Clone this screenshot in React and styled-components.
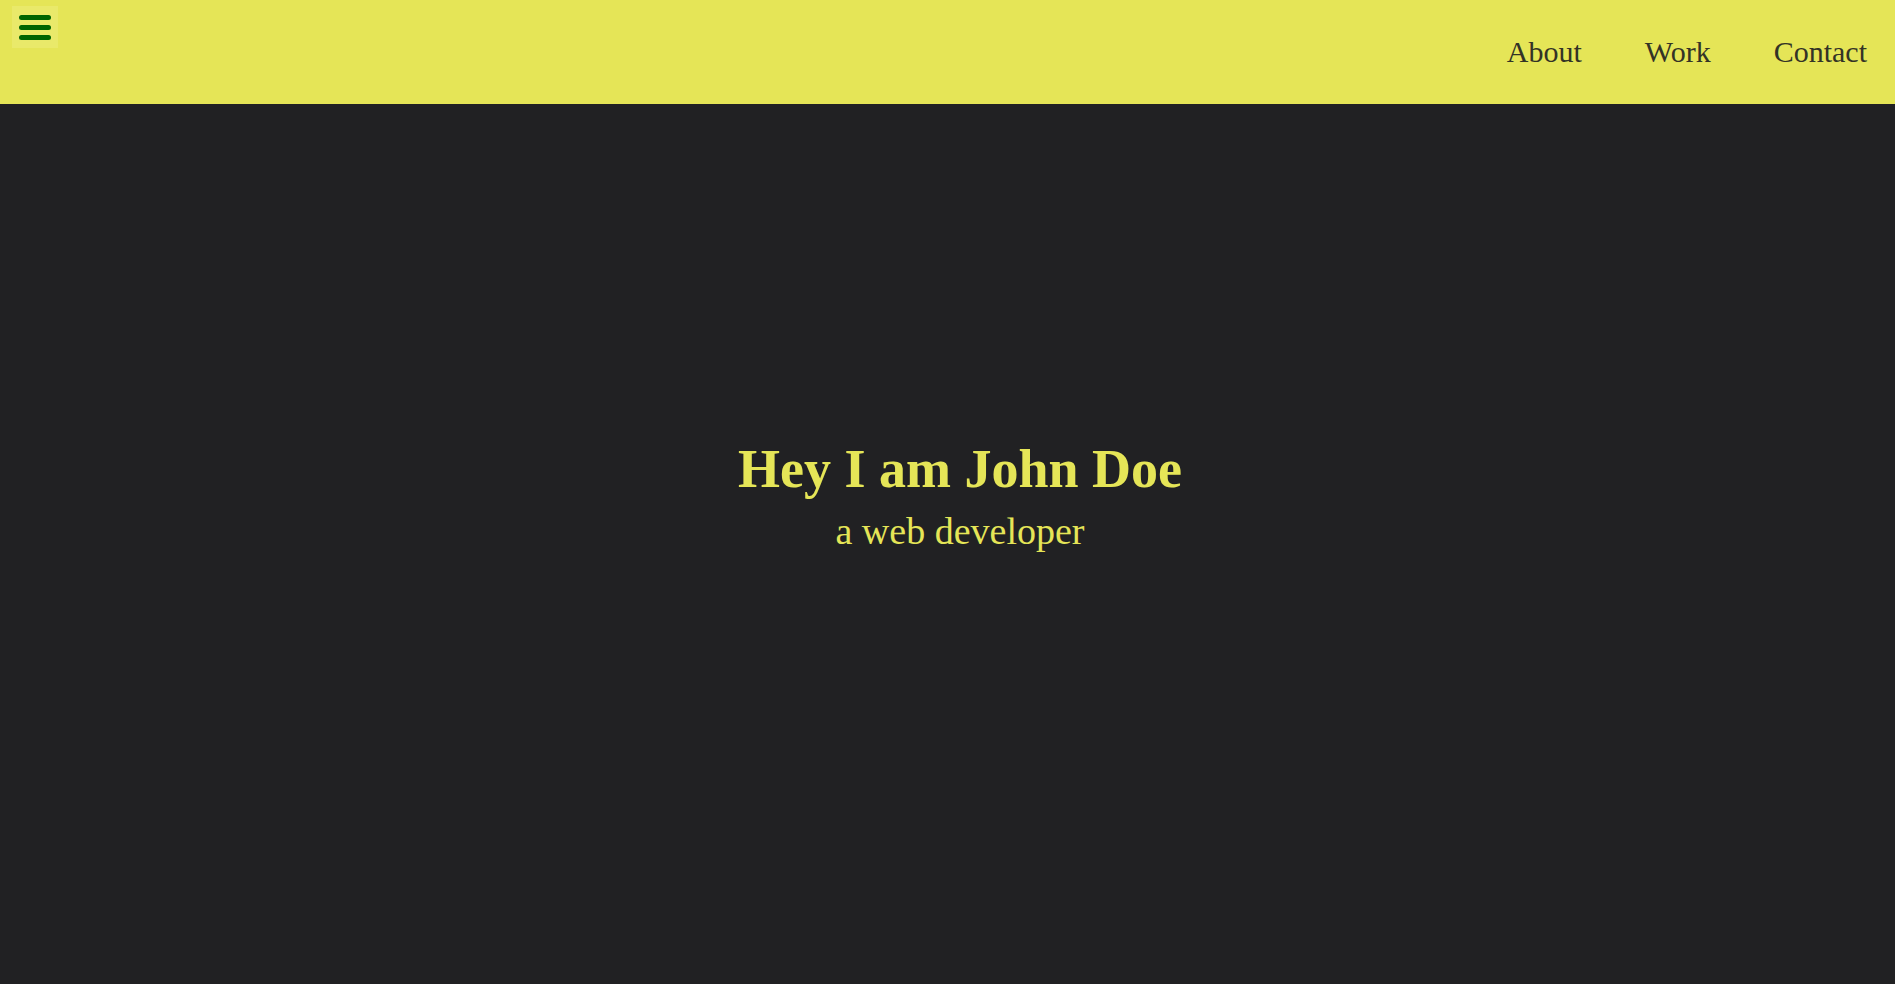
import React from "react";
import styled, { createGlobalStyle } from "styled-components";

const Global = createGlobalStyle`
  html, body { margin: 0; padding: 0; background: #212123; }
  body { font-family: "Liberation Serif", "DejaVu Serif", serif; }
`;

const Page = styled.div`
  display: flex;
  flex-direction: column;
  min-height: 984px;
  background: #212123;
`;

const Header = styled.header`
  height: 104px;
  background: #e5e557;
  display: flex;
  justify-content: space-between;
  align-items: flex-start;
  box-sizing: border-box;
  padding: 6px 28px 0 12px;
`;

const MenuButton = styled.button`
  width: 46px;
  height: 42px;
  border: none;
  padding: 0;
  background: #e9e96a;
  display: flex;
  align-items: center;
  justify-content: center;
  cursor: pointer;
`;

const Nav = styled.nav`
  display: flex;
  gap: 63px;
  padding-top: 31px;
`;

const NavLink = styled.a`
  font-size: 30px;
  color: #333326;
  text-decoration: none;
  line-height: 1;
`;

const Hero = styled.main`
  flex: 1;
  display: flex;
  flex-direction: column;
  align-items: center;
  justify-content: center;
  padding: 0 0 96px 25px;
  color: #e5e557;
`;

const Title = styled.h1`
  margin: 0 0 10px;
  font-size: 54px;
  font-weight: 700;
  line-height: 1.15;
`;

const Subtitle = styled.p`
  margin: 0;
  font-size: 38px;
  line-height: 1.15;
`;

export default function App() {
  return (
    <Page>
      <Global />
      <Header>
        <MenuButton aria-label="menu">
          <svg width="34" height="28" viewBox="0 0 34 28">
            <g stroke="#006400" strokeWidth="5" strokeLinecap="round">
              <line x1="3.5" y1="4.5" x2="30.5" y2="4.5" />
              <line x1="3.5" y1="14.5" x2="30.5" y2="14.5" />
              <line x1="3.5" y1="24.5" x2="30.5" y2="24.5" />
            </g>
          </svg>
        </MenuButton>
        <Nav>
          <NavLink href="#">About</NavLink>
          <NavLink href="#">Work</NavLink>
          <NavLink href="#">Contact</NavLink>
        </Nav>
      </Header>
      <Hero>
        <Title>Hey I am John Doe</Title>
        <Subtitle>a web developer</Subtitle>
      </Hero>
    </Page>
  );
}
